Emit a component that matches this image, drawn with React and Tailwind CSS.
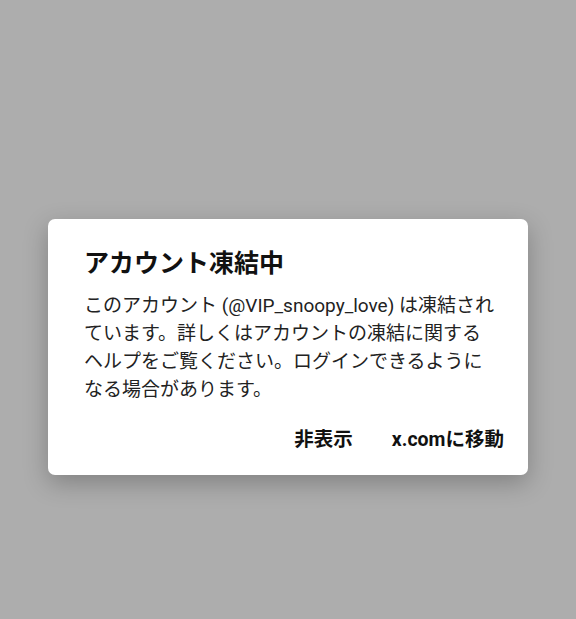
export default function App() {
  return (
    <div
      className="w-[576px] h-[619px] bg-[#adadad] flex items-start justify-center pt-[219px]"
      style={{ fontFamily: "Roboto, 'Noto Sans CJK JP', sans-serif" }}
    >
      <div className="w-[480px] h-[256px] bg-white rounded-[7px] shadow-[0_8px_24px_rgba(0,0,0,0.25)] flex flex-col pt-[28px] pl-[36px] pr-[24px]">
        <h1 className="text-[25px] leading-[33px] font-bold text-[#111]">アカウント凍結中</h1>
        <p className="mt-[12px] w-[414px] text-[19px] leading-[28px] text-[#222]">
          このアカウント (@VIP_snoopy_love) は凍結されています。詳しくはアカウントの凍結に関するヘルプをご覧ください。ログインできるようになる場合があります。
        </p>
        <div className="mt-[18px] flex justify-end items-center gap-[39px] text-[19.5px] font-bold text-[#111]">
          <button className="h-[36px]">非表示</button>
          <button className="h-[36px]">x.comに移動</button>
        </div>
      </div>
    </div>
  );
}
